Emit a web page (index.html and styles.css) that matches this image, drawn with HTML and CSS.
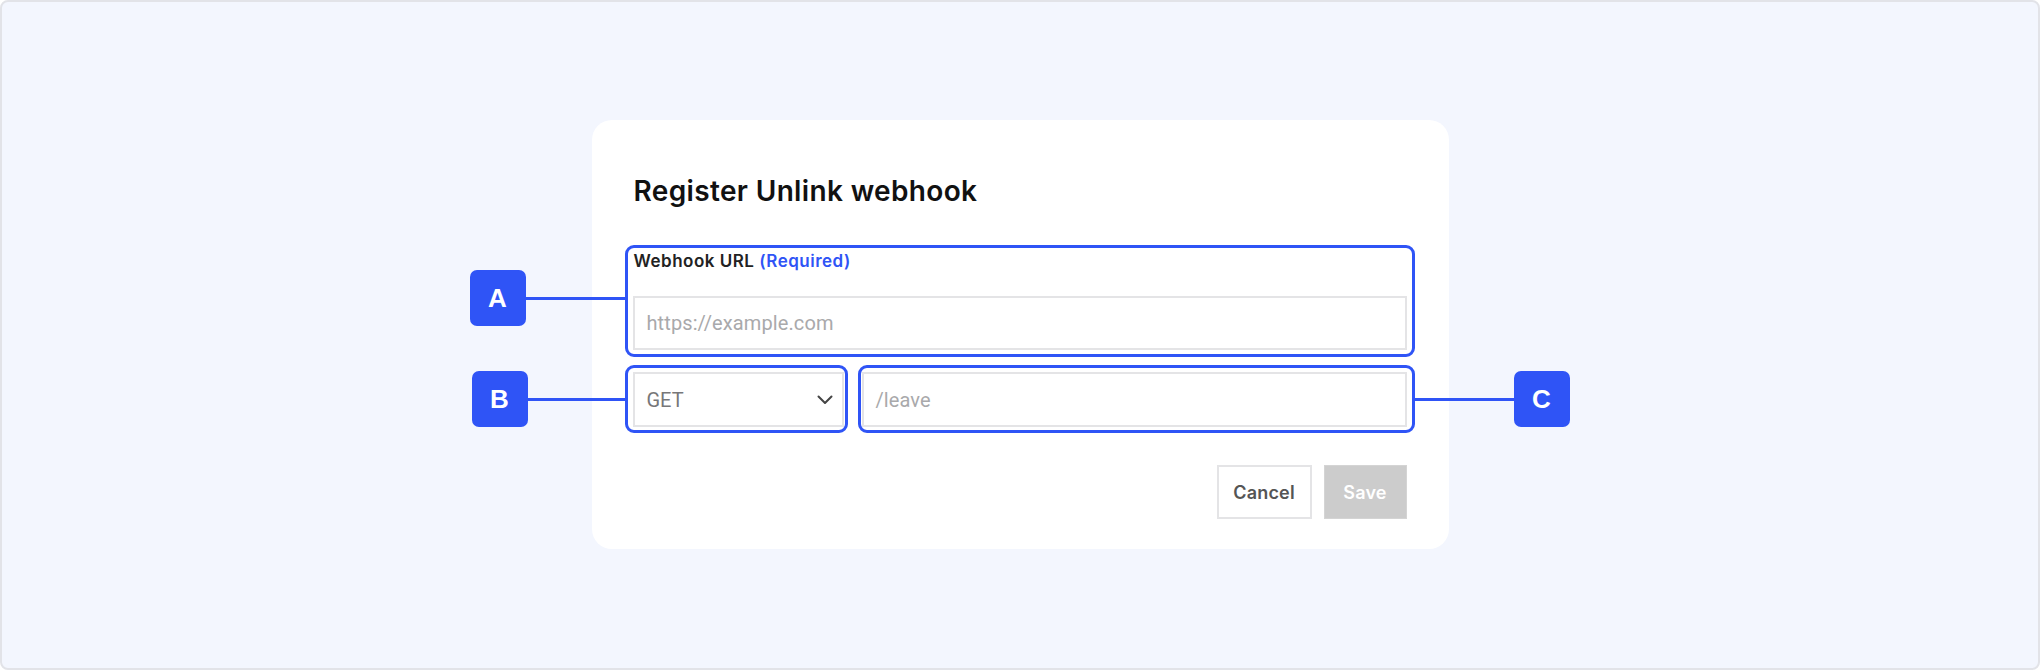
FILE: index.html
```html
<!DOCTYPE html>
<html lang="en">
<head>
<meta charset="utf-8">
<title>Register Unlink webhook</title>
<link rel="stylesheet" href="styles.css">
</head>
<body>
<div class="frame">
  <div class="card">
    <h1 class="title">Register Unlink webhook</h1>

    <div class="anno anno-a">
      <div class="callout callout-left"><span class="badge">A</span><span class="line"></span></div>
      <label class="label">Webhook URL <span class="req">(Required)</span></label>
      <div class="field"><span class="placeholder">https://example.com</span></div>
    </div>

    <div class="row">
      <div class="anno anno-b">
        <div class="callout callout-left"><span class="badge">B</span><span class="line"></span></div>
        <div class="field select">
          <span class="value">GET</span>
          <svg class="chev" width="16" height="10" viewBox="0 0 16 10"><path d="M1.5 1.5 L8 8 L14.5 1.5" fill="none" stroke="#444" stroke-width="2" stroke-linecap="round" stroke-linejoin="round"/></svg>
        </div>
      </div>
      <div class="anno anno-c">
        <div class="callout callout-right"><span class="line"></span><span class="badge">C</span></div>
        <div class="field"><span class="placeholder">/leave</span></div>
      </div>
    </div>

    <div class="actions">
      <button class="btn btn-cancel">Cancel</button>
      <button class="btn btn-save">Save</button>
    </div>
  </div>
</div>
</body>
</html>
```

FILE: styles.css
```css
* { box-sizing: border-box; }
html, body { margin: 0; padding: 0; }
body { font-family: Inter, "Noto Sans", sans-serif; }

.frame {
  width: 2040px;
  height: 670px;
  background: #f3f6fe;
  border: 2px solid #e2e3e8;
  border-radius: 8px;
  display: flex;
  justify-content: center;
  align-items: flex-start;
  padding-top: 118px;
}

.card {
  width: 857px;
  background: #ffffff;
  border-radius: 20px;
  padding: 54px 34px 30px 33px;
  display: flex;
  flex-direction: column;
}

.title {
  margin: 0 0 37px 9px;
  font-size: 28px;
  line-height: 34px;
  font-weight: 600;
  color: #111111;
  letter-spacing: 0.35px;
}

.anno {
  position: relative;
  border: 3px solid #2f54f6;
  border-radius: 9px;
}
.anno-a {
  padding: 3px 5px 4px 5px;
  display: flex;
  flex-direction: column;
}
.label {
  font-size: 17px;
  line-height: 21px;
  font-weight: 600;
  color: #222222;
  margin: 0 0 24px 1px;
  letter-spacing: 0.5px;
}
.req { color: #2f54f6; }

.field {
  height: 54px;
  border: 2px solid #e4e4e6;
  display: flex;
  align-items: center;
  padding: 0 12px;
  font-family: Roboto, "Liberation Sans", sans-serif;
  font-size: 20px;
}
.placeholder { color: #a9a9ab; letter-spacing: 0.1px; }

.row {
  display: flex;
  gap: 10px;
  margin-top: 8px;
}
.anno-b {
  width: 223px;
  padding: 4px 1px 3px 5px;
}
.anno-c {
  flex: 1;
  padding: 4px 5px 3px 1px;
}
.anno-b .field, .anno-c .field { height: 55px; }
.select { justify-content: space-between; padding-right: 9px; }
.select .value { color: #777779; }
.chev { display: block; }

.callout {
  position: absolute;
  top: 50%;
  transform: translateY(-50%);
  display: flex;
  align-items: center;
}
.callout-left { right: calc(100% + 3px); }
.callout-right { left: calc(100% + 3px); }
.anno-a .callout { margin-top: -3px; }

.badge {
  width: 56px;
  height: 56px;
  border-radius: 7px;
  background: #2f54f6;
  color: #ffffff;
  font-family: "Liberation Sans", Arial, sans-serif;
  font-weight: 700;
  font-size: 26px;
  display: flex;
  align-items: center;
  justify-content: center;
}
.line {
  display: block;
  width: 99px;
  height: 3px;
  background: #2f54f6;
}
.anno-b .line { width: 97px; }

.actions {
  display: flex;
  justify-content: flex-end;
  gap: 12px;
  margin-top: 32px;
  padding-right: 8px;
}
.btn {
  height: 54px;
  font-family: Inter, "Noto Sans", sans-serif;
  font-size: 18px;
  font-weight: 600;
  letter-spacing: 0.2px;
  border-radius: 0;
  cursor: pointer;
  padding: 0;
}
.btn-cancel {
  width: 95px;
  background: #ffffff;
  border: 2px solid #e4e4e6;
  color: #555555;
}
.btn-save {
  width: 83px;
  background: #cccccc;
  border: 1px solid #d4d4d4;
  color: #ffffff;
}
```
